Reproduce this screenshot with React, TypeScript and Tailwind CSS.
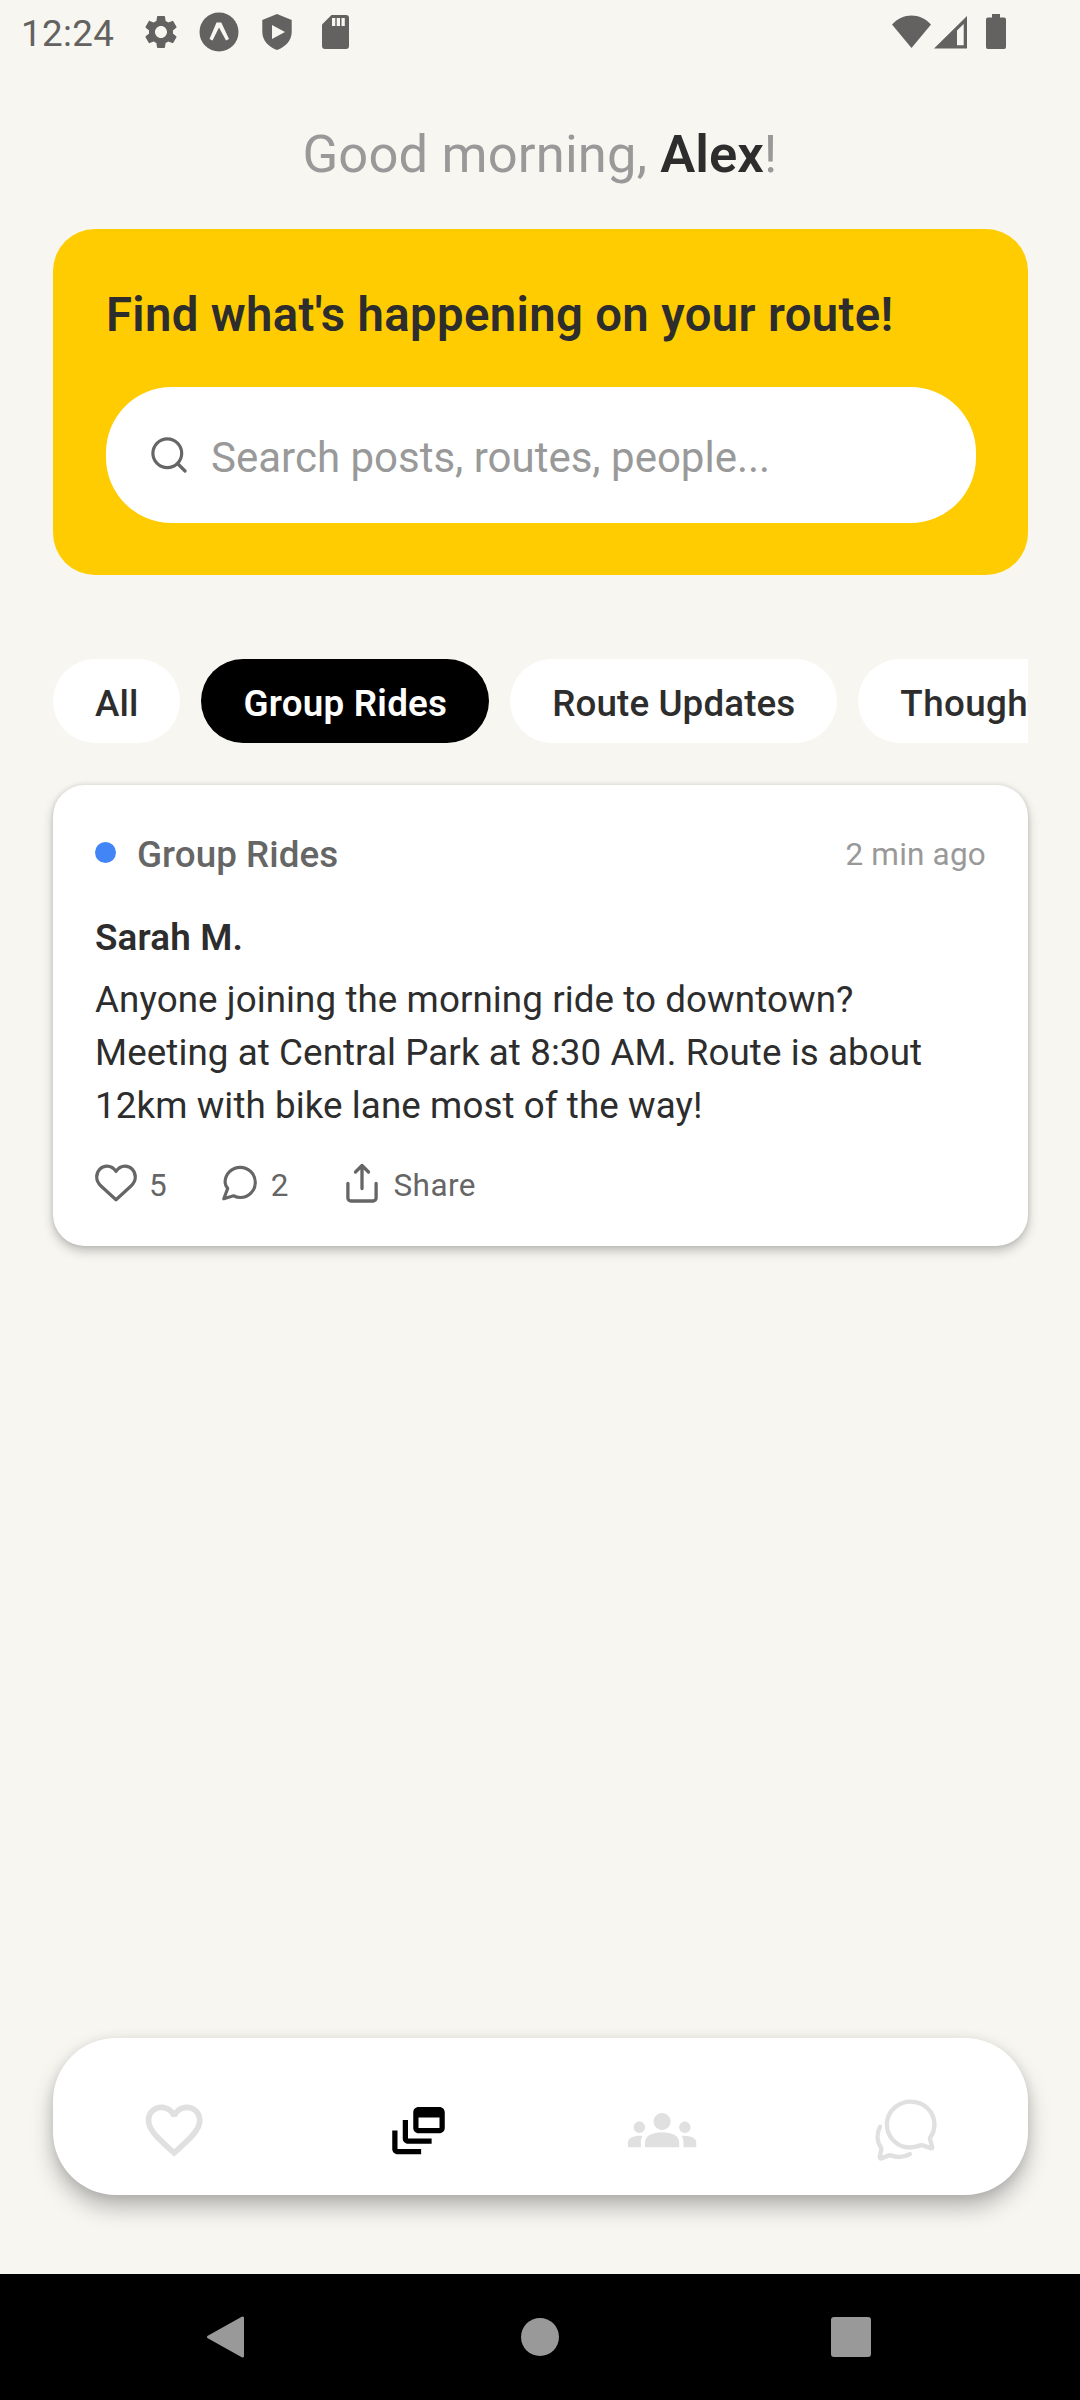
import { IoChatbubblesOutline } from "react-icons/io5";
import { MdDynamicFeed, MdFavoriteBorder, MdGroups, MdSettings } from "react-icons/md";

const chips = ["All", "Group Rides", "Route Updates", "Thoughts"];

function StatusBar() {
  return (
    <header className="flex h-[63px] items-center pl-[21px] pr-[74px] text-[#636260]">
      <span className="w-[93px] pt-[4px] text-[36.75px] leading-[43px] tracking-[0.35px]">12:24</span>
      <MdSettings className="ml-[27px] size-[40px]" />
      <svg className="ml-[18px] h-[40px] w-[40px]" viewBox="0 0 40 40">
        <circle cx="20" cy="20" r="19.5" fill="currentColor" />
        <path d="M17.5 10.5h4.800L30 27l-3 1.500L20 15.500 13.500 28.500 10.500 27Z" fill="#f7f6f1" />
      </svg>
      <svg className="ml-[23px] h-[38px] w-[30px]" viewBox="0 0 30 38">
        <path d="M15 1 29.700 7v12c0 8-6 15-14.700 18C6.300 34 .3 27 .3 19V7Z" fill="currentColor" />
        <path d="M10 12v14l13-7Z" fill="#f7f6f1" />
      </svg>
      <svg className="ml-[29.500px] h-[36px] w-[27px]" viewBox="0 0 27 36">
        <path d="M9.500 1H24a3 3 0 0 1 3 3v28a3 3 0 0 1-3 3H3a3 3 0 0 1-3-3V10.500Z" fill="currentColor" />
        <path d="M10 4h3.300v8H10zM14.700 4H18v8h-3.300zM19.500 4h3.300v8h-3.300z" fill="#f7f6f1" />
      </svg>
      <div className="ml-auto flex items-center">
        <svg className="h-[34px] w-[39px]" viewBox="0 0 39 34">
          <path d="M0 9.500C11-2.500 28-2.500 39 9.500L19.500 33Z" fill="currentColor" />
        </svg>
        <svg className="ml-[3px] h-[34px] w-[33px]" viewBox="0 0 33 34">
          <path fillRule="evenodd" d="M33 1v32.500H0ZM29.700 9 23 15.500v14.700h6.700Z" fill="currentColor" />
        </svg>
        <svg className="ml-[19px] h-[35px] w-[20px]" viewBox="0 0 20 35">
          <path d="M6 0h8v3.500h4a2 2 0 0 1 2 2V33a2 2 0 0 1-2 2H2a2 2 0 0 1-2-2V5.500a2 2 0 0 1 2-2h4Z" fill="currentColor" />
        </svg>
      </div>
    </header>
  );
}

function PostCard() {
  return (
    <article className="mt-[42px] h-[461px] rounded-[31.5px] bg-white px-[42px] pt-[42px] shadow-[0_5px_11px_rgba(0,0,0,0.23),0_0_5px_rgba(0,0,0,0.11)]">
      <div className="flex h-[51px] items-center">
        <span className="size-[21px] rounded-full bg-[#4285f7]" />
        <span className="ml-[21px] pt-[4px] text-[36.75px] font-medium tracking-[0.08px] text-[#666666]">Group Rides</span>
        <span className="ml-auto pt-[4px] text-[31.5px] tracking-[0.2px] text-[#999999]">2 min ago</span>
      </div>
      <h3 className="mt-[34px] text-[36.75px] leading-[52px] font-semibold tracking-[0.17px]">Sarah M.</h3>
      <p className="mt-[9px] w-[870px] text-[36.75px] leading-[53px] tracking-[0.08px]">
        Anyone joining the morning ride to downtown? <br />
        Meeting at Central Park at 8:30 AM. Route is about <br />
        12km with bike lane most of the way!
      </p>
      <div className="mt-[28px] flex h-[44px] items-center text-[31.5px] text-[#666666]">
        <svg className="h-[44px] w-[42px]" viewBox="0 0 42 44" fill="none" stroke="currentColor" strokeWidth="3.200" strokeLinejoin="round">
          <path d="M21 11.500C18.500 7.500 15.500 6.100 12 6.100 6 6.100 1.700 11 1.700 17c0 4 1.600 6.500 4.300 9L21 39.800 36 26c2.700-2.500 4.300-5 4.300-9 0-6-4.300-10.900-10.300-10.900-3.500 0-6.500 1.400-9 5.400Z" />
        </svg>
        <span className="ml-[12px] pt-[7px]">5</span>
        <svg className="ml-[55px] h-[44px] w-[36px]" viewBox="0 0 36 44" fill="none" stroke="currentColor" strokeWidth="3.200" strokeLinejoin="round">
          <path d="M5.700 28.500C4 26 3.100 24.500 3.100 22.400A15.100 15.100 0 1 1 18.200 37.500C15.500 37.500 14 37 11.500 35.800L1.800 38.700Z" />
        </svg>
        <span className="ml-[13px] pt-[7px]">2</span>
        <svg className="ml-[58px] h-[44px] w-[32px]" viewBox="0 0 32 44" fill="none" stroke="currentColor" strokeWidth="3.300" strokeLinecap="round" strokeLinejoin="round">
          <path d="M1.900 23.300V38a3 3 0 0 0 3 3h22.200a3 3 0 0 0 3-3V23.300M16 28.500V6M9.500 12 16 5.500 22.500 12" />
        </svg>
        <span className="ml-[15px] pt-[7px] tracking-[0.45px]">Share</span>
      </div>
    </article>
  );
}

function TabBar() {
  return (
    <nav className="grid h-[157px] grid-cols-4 items-center justify-items-center rounded-[63px] bg-white pt-[27px] text-[#e0e0e0] shadow-[0_13px_22px_rgba(0,0,0,0.25),0_2px_12px_rgba(0,0,0,0.1)]">
      <MdFavoriteBorder className="mr-[1px] size-[68.250px]" />
      <MdDynamicFeed className="size-[63px] text-black" />
      <MdGroups className="size-[68.250px]" />
      <IoChatbubblesOutline className="mr-[1px] mb-[1px] size-[70px]" />
    </nav>
  );
}

export default function App() {
  return (
    <div className="flex h-[2400px] w-[1080px] flex-col overflow-hidden bg-[#f7f6f1] font-[Roboto,sans-serif] text-[#2d2d2d]">
      <StatusBar />
      <main className="flex flex-1 flex-col pr-[52px] pb-[79px] pl-[53px]">
        <h1 className="mt-[60px] pr-[1px] text-center text-[52.500px] leading-[62px] tracking-[0.16px] text-[#999999]">
          Good morning, <strong className="font-semibold tracking-normal text-[#2d2d2d]">Alex</strong>!
        </h1>
        <section className="mt-[44px] h-[346px] rounded-[42px] bg-[#ffcc02] pr-[52px] pl-[53px] pt-[55px]">
          <h2 className="text-[47.250px] leading-[63px] font-semibold tracking-[0.36px]">Find what's happening on your route!</h2>
          <div className="mt-[40px] flex h-[136px] items-center rounded-[65.600px] bg-white pl-[45px]">
            <svg className="h-[36px] w-[36px] text-[#666666]" viewBox="0 0 36 36" fill="none" stroke="currentColor" strokeWidth="3.200" strokeLinecap="round">
              <circle cx="16.300" cy="16.200" r="14.400" />
              <path d="m27 27 7 7" />
            </svg>
            <span className="ml-[24px] pt-[4px] text-[42px] text-[#999999]">Search posts, routes, people...</span>
          </div>
        </section>
        <div className="mt-[84px] flex gap-[21px] overflow-hidden">
          {chips.map((chip) => (
            <button
              key={chip}
              className={
                chip === "Group Rides"
                  ? "h-[84px] shrink-0 rounded-full bg-black px-[42px] pt-[5px] text-[36.750px] font-semibold tracking-[0.24px] text-white"
                  : chip === "Thoughts"
                    ? "h-[84px] shrink-0 rounded-full bg-white px-[42px] pt-[5px] text-[36.750px] font-medium tracking-[0.4px]"
                    : "h-[84px] shrink-0 rounded-full bg-white px-[42px] pt-[5px] text-[36.750px] font-medium tracking-[0.12px]"
              }
            >
              {chip}
            </button>
          ))}
        </div>
        <PostCard />
        <div className="mt-auto">
          <TabBar />
        </div>
      </main>
      <footer className="flex h-[126px] items-center bg-black text-[#999999]">
        <svg className="ml-[206px] h-[44px] w-[39px]" viewBox="0 0 39 44">
          <path d="M36.500 3v38L2.500 22Z" fill="currentColor" stroke="currentColor" strokeWidth="3" strokeLinejoin="round" />
        </svg>
        <span className="ml-[276px] size-[38px] rounded-full bg-current" />
        <span className="ml-[272px] size-[40px] rounded-[3px] bg-current" />
      </footer>
    </div>
  );
}
